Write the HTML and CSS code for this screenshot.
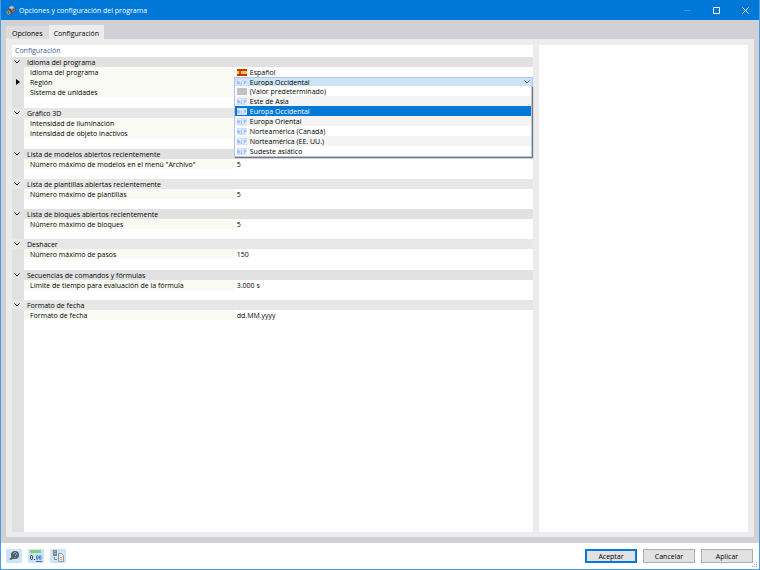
FILE: index.html
```html
<!DOCTYPE html>
<html lang="es">
<head>
    <meta charset="UTF-8">
    <meta name="viewport" content="width=device-width, initial-scale=1.0">
    <title>Opciones y configuración del programa</title>
    <link rel="stylesheet" href="styles.css">
</head>
<body>
    <svg class="defs" aria-hidden="true">
        <symbol id="map" viewBox="0 0 10 7">
            <rect width="10" height="7" fill="#cfe0fc"/>
            <path d="M0 2h1l2 1v2L1 5H0zM4 3h1v3H4zM7 2h2v2L8 5H7z" fill="#a3c0f8"/>
            <path d="M1 1h3v1H2zM5 3h1v2H5zM8 5l2-1v2H8z" fill="#eef4ff"/>
        </symbol>
        <symbol id="chevron" viewBox="0 0 6 4">
            <path d="M0.5 0.5L3 3L5.5 0.5" fill="none" stroke="currentColor"/>
        </symbol>
    </svg>
    <header class="titlebar">
        <svg class="app-icon" viewBox="0 0 10 10">
            <path d="M2 3l3-2 4 1 1 3-3 4-4-2z" fill="#4b5362"/>
            <path d="M3 3l2-2 3 1-2 2zM5 5l4-2M6 7l3-2" fill="#b9c4d3" stroke="#aab6c6" stroke-width="0.6"/>
            <circle cx="2.500" cy="7.500" r="1.500" fill="#6b5a3a" stroke="#e3ad35"/>
        </svg>
        <h1 class="title">Opciones y configuración del programa</h1>
        <button class="window-button" aria-label="Minimizar" disabled><svg viewBox="0 0 7 7"><path d="M0 3.5h7" stroke="#3b93dc"/></svg></button>
        <button class="window-button" aria-label="Maximizar"><svg viewBox="0 0 7 7"><path d="M0.5 0.5h6v6h-6z" fill="none" stroke="#fff"/></svg></button>
        <button class="window-button" aria-label="Cerrar"><svg viewBox="0 0 7 7"><path d="M0.5 0.5l6 6M6.5 0.5l-6 6" stroke="#fff"/></svg></button>
    </header>

    <main class="content">
        <nav class="tabs">
            <button class="tab">Opciones</button>
            <button class="tab active">Configuración</button>
        </nav>
        <div class="page">
            <section class="settings">
                <h2 class="settings-title">Configuración</h2>

                <div class="group tall">
                    <button class="group-header"><svg class="arrow"><use href="#chevron"/></svg><span>Idioma del programa</span></button>
                    <div class="row">
                        <label for="language">Idioma del programa</label>
                        <div class="value">
                            <svg class="flag" viewBox="0 0 10 7">
                                <rect width="10" height="7" fill="#d52b1e"/>
                                <rect y="2" width="10" height="3" fill="#f8cf2c"/>
                                <rect x="2" y="2" width="2" height="3" fill="#b3552a"/>
                            </svg>
                            <select id="language"><option>Español</option></select>
                        </div>
                    </div>
                    <div class="row current">
                        <label for="region">Región</label>
                        <div class="value open">
                            <svg class="flag"><use href="#map"/></svg>
                            <select id="region"><option>Europa Occidental</option></select>
                            <svg class="drop-arrow"><use href="#chevron"/></svg>
                            <ul class="menu" role="listbox" aria-label="Región">
                                <li role="option"><span class="flag no-map"></span>(Valor predeterminado)</li>
                                <li role="option"><svg class="flag"><use href="#map"/></svg>Este de Asia</li>
                                <li role="option" class="selected" aria-selected="true"><svg class="flag"><use href="#map"/></svg>Europa Occidental</li>
                                <li role="option"><svg class="flag"><use href="#map"/></svg>Europa Oriental</li>
                                <li role="option"><svg class="flag"><use href="#map"/></svg>Norteamérica (Canadá)</li>
                                <li role="option"><svg class="flag"><use href="#map"/></svg>Norteamérica (EE. UU.)</li>
                                <li role="option"><svg class="flag"><use href="#map"/></svg>Sudeste asiático</li>
                            </ul>
                        </div>
                    </div>
                    <div class="row"><span class="name">Sistema de unidades</span></div>
                </div>

                <div class="group tall">
                    <button class="group-header"><svg class="arrow"><use href="#chevron"/></svg><span>Gráfico 3D</span></button>
                    <div class="row"><span class="name">Intensidad de iluminación</span></div>
                    <div class="row"><span class="name">Intensidad de objeto inactivos</span></div>
                </div>

                <div class="group">
                    <button class="group-header"><svg class="arrow"><use href="#chevron"/></svg><span>Lista de modelos abiertos recientemente</span></button>
                    <div class="row">
                        <label for="models">Número máximo de modelos en el menú "Archivo"</label>
                        <div class="value"><input id="models" type="text" value="5"></div>
                    </div>
                </div>

                <div class="group">
                    <button class="group-header"><svg class="arrow"><use href="#chevron"/></svg><span>Lista de plantillas abiertas recientemente</span></button>
                    <div class="row">
                        <label for="templates">Número máximo de plantillas</label>
                        <div class="value"><input id="templates" type="text" value="5"></div>
                    </div>
                </div>

                <div class="group">
                    <button class="group-header"><svg class="arrow"><use href="#chevron"/></svg><span>Lista de bloques abiertos recientemente</span></button>
                    <div class="row">
                        <label for="blocks">Número máximo de bloques</label>
                        <div class="value"><input id="blocks" type="text" value="5"></div>
                    </div>
                </div>

                <div class="group tall">
                    <button class="group-header"><svg class="arrow"><use href="#chevron"/></svg><span>Deshacer</span></button>
                    <div class="row">
                        <label for="steps">Número máximo de pasos</label>
                        <div class="value"><input id="steps" type="text" value="150"></div>
                    </div>
                </div>

                <div class="group">
                    <button class="group-header"><svg class="arrow"><use href="#chevron"/></svg><span>Secuencias de comandos y fórmulas</span></button>
                    <div class="row">
                        <label for="timeout">Límite de tiempo para evaluación de la fórmula</label>
                        <div class="value"><input id="timeout" type="text" value="3.000 s"></div>
                    </div>
                </div>

                <div class="group">
                    <button class="group-header"><svg class="arrow"><use href="#chevron"/></svg><span>Formato de fecha</span></button>
                    <div class="row">
                        <label for="date">Formato de fecha</label>
                        <div class="value"><input id="date" type="text" value="dd.MM.yyyy"></div>
                    </div>
                </div>
            </section>
            <aside class="preview"></aside>
        </div>
    </main>

    <footer class="footer">
        <button class="tool" aria-label="Ayuda">
            <svg viewBox="0 0 16 14">
                <circle cx="9" cy="6" r="4" fill="#4f5b66"/>
                <path d="M6 8l-3 2 2 1 3-2z" fill="#4f5b66"/>
                <path d="M7.5 5c0-2 3-2 3 0 0 1-1.5 1-1.5 2M9 8v1" fill="none" stroke="#b9c6d0"/>
            </svg>
        </button>
        <button class="tool" aria-label="Unidades y decimales">
            <svg viewBox="0 0 16 14">
                <rect x="2" y="1" width="11" height="3" fill="#86cf7a"/>
                <rect x="2.5" y="6.5" width="2" height="4" rx="1" fill="none" stroke="#30363c"/>
                <rect x="6" y="10" width="1" height="1" fill="#30363c"/>
                <rect x="8.5" y="6.5" width="1.500" height="4" rx="1" fill="none" stroke="#3a6fc4"/>
                <rect x="11.5" y="6.5" width="1.500" height="4" rx="1" fill="none" stroke="#3a6fc4"/>
                <path d="M8 12.5h6" stroke="#3a6fc4"/>
            </svg>
        </button>
        <button class="tool" aria-label="Copiar configuración">
            <svg viewBox="0 0 16 14">
                <path d="M3 1h4v6H3z" fill="#7f8890"/>
                <path d="M4 2.5h2M4 4.5h2" stroke="#a4acb3"/>
                <path d="M4.5 8v2.5H7" fill="none" stroke="#6c8fb0"/>
                <path d="M8.500 4.500h3l2 2v6h-5z" fill="#e6e6e6" stroke="#9a9a9a"/>
                <path d="M10 8.500h2M10 10.500h2" stroke="#b0b0b0"/>
            </svg>
        </button>
        <div class="actions">
            <button class="button primary">Aceptar</button>
            <button class="button">Cancelar</button>
            <button class="button">Aplicar</button>
        </div>
        <svg class="grip" viewBox="0 0 6 6"><path d="M4 0h1v1H4zM2 2h1v1H2zM4 2h1v1H4zM0 4h1v1H0zM2 4h1v1H2zM4 4h1v1H4z" fill="#a8a8a8"/></svg>
    </footer>
</body>
</html>
```
FILE: styles.css
```css
* {
    box-sizing: border-box;
}
body {
    display: flex;
    flex-direction: column;
    height: 100vh;
    margin: 0;
    border: 1px solid #4a9be0;
    border-top: 0;
    background: white;
    color: black;
    font-family: "Open Sans", "Noto Sans", sans-serif;
    font-size: 7px;
    line-height: 11px;
}
button, input, select {
    margin: 0;
    padding: 0;
    border: 0;
    border-radius: 0;
    background: none;
    color: inherit;
    font: inherit;
}
svg {
    display: block;
    flex: none;
}
.defs {
    position: absolute;
    width: 0;
    height: 0;
}

/* Title bar */
.titlebar {
    display: flex;
    align-items: center;
    height: 20px;
    margin: 0 -1px;
    padding-left: 6px;
    background: #0078d7;
    color: white;
}
.app-icon {
    width: 10px;
    height: 10px;
}
.title {
    flex: 1;
    margin: 0 0 0 3px;
    font-size: 7px;
    font-weight: normal;
}
.window-button {
    display: flex;
    justify-content: center;
    align-items: center;
    width: 29px;
    height: 20px;
}
.window-button svg {
    width: 7px;
    height: 7px;
}

/* Tabs and page */
.content {
    flex: 1;
    display: flex;
    flex-direction: column;
    min-height: 0;
    padding: 5px 5px 6px;
    background: #d1d0d5;
}
.tabs {
    display: flex;
    align-items: flex-end;
}
.tab {
    height: 13px;
    padding: 1px 6px 0;
    background: #dddddd;
}
.tab.active {
    height: 14px;
    padding: 2px 5px 0;
    background: #ececec;
}
.page {
    flex: 1;
    display: grid;
    grid-template-columns: 5fr 2fr;
    gap: 6px;
    min-height: 0;
    padding: 6px 6px 5px;
    background: #ececec;
}
.preview {
    background: white;
}

/* Property grid */
.settings {
    background: linear-gradient(to right, #e1e1e1 12px, white 12px);
}
.settings-title {
    height: 12px;
    margin: 0;
    padding-left: 3px;
    background: white;
    color: #3f5b96;
    font-size: 7px;
    font-weight: normal;
    line-height: 12px;
}
.group {
    padding-bottom: 10px;
}
.group.tall {
    padding-bottom: 11px;
}
.group-header {
    display: flex;
    align-items: center;
    width: 100%;
    height: 10px;
    background: #e1e1e1;
    text-align: left;
}
.group:nth-child(odd) .group-header {
    background: #e7e7e7;
}
.arrow {
    width: 6px;
    height: 4px;
    margin: 0 7px 0 2px;
}
.row {
    position: relative;
    display: grid;
    grid-template-columns: 7fr 10fr;
    height: 10px;
    margin-left: 12px;
}
.row label, .row .name {
    height: 10px;
    padding-left: 6px;
    background: #f9faf4;
    white-space: nowrap;
}
.row.current::before {
    content: "";
    position: absolute;
    left: -8px;
    top: 2px;
    border: 3px solid transparent;
    border-left: 4px solid black;
    border-right: 0;
}
.value {
    display: flex;
    align-items: center;
    height: 10px;
    padding-left: 3px;
}
.value input, .value select {
    flex: 1;
    min-width: 0;
    height: 10px;
    appearance: none;
    outline: none;
}
.flag {
    width: 10px;
    height: 7px;
    margin-right: 3px;
}
.no-map {
    background: #c2c2c2;
}
.value.open {
    position: relative;
    padding-left: 2px;
    border: 1px solid #b3c3f3;
    background: #cce4f7;
}
.drop-arrow {
    width: 6px;
    height: 4px;
    margin-right: 2px;
    color: #5c6a78;
}
.menu {
    position: absolute;
    z-index: 1;
    top: 8px;
    left: -1px;
    right: 0;
    margin: 0;
    padding: 0;
    border: 1px solid #b3c3f3;
    border-top: 0;
    background: white;
    box-shadow: 1px 1px 1px #777777;
    list-style: none;
}
.menu li {
    display: flex;
    align-items: center;
    height: 10px;
    padding-left: 2px;
}
.menu li:nth-child(even) {
    background: #f4f4f4;
}
.menu li.selected {
    background: #0078d7;
    color: white;
}

/* Footer */
.footer {
    position: relative;
    display: flex;
    align-items: center;
    gap: 6px;
    height: 26px;
    padding: 0 6px 0 5px;
}
.tool {
    width: 16px;
    height: 14px;
    background: #cce4f7;
}
.actions {
    display: flex;
    gap: 6px;
    margin-left: auto;
}
.button {
    width: 52px;
    height: 14px;
    padding-top: 1px;
    border: 1px solid #adadad;
    background: #e1e1e1;
}
.button.primary {
    border: 1px solid #0078d7;
    outline: 1px solid #0078d7;
    outline-offset: -2px;
}
.grip {
    position: absolute;
    right: 1px;
    bottom: 1px;
    width: 6px;
    height: 6px;
}
```
